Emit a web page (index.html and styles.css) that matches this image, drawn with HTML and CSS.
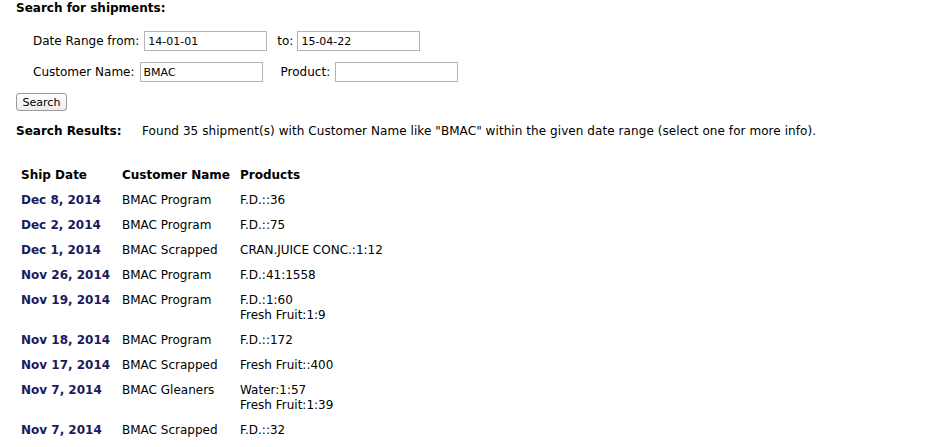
FILE: index.html
```html
<!DOCTYPE html>
<html>
<head>
<meta charset="utf-8">
<link rel="stylesheet" href="styles.css">
</head>
<body>
<div class="page">
  <h1 class="title">Search for shipments:</h1>
  <form class="search-form">
    <div class="form-row">
      <label class="lbl lbl-from">Date Range from:</label>
      <input class="field" type="text" value="14-01-01">
      <label class="lbl lbl-to">to:</label>
      <input class="field" type="text" value="15-04-22">
    </div>
    <div class="form-row">
      <label class="lbl lbl-cust">Customer Name:</label>
      <input class="field" type="text" value="BMAC">
      <label class="lbl lbl-prod">Product:</label>
      <input class="field" type="text" value="">
    </div>
    <button class="btn" type="button">Search</button>
  </form>
  <div class="results-line">
    <span class="results-label">Search Results:</span>
    <span class="results-text">Found 35 shipment(s) with Customer Name like "BMAC" within the given date range (select one for more info).</span>
  </div>
  <table class="results">
    <thead>
      <tr><th class="c-date">Ship Date</th><th class="c-cust">Customer Name</th><th>Products</th></tr>
    </thead>
    <tbody>
      <tr><td class="date">Dec 8, 2014</td><td>BMAC Program</td><td>F.D.::36</td></tr>
      <tr><td class="date">Dec 2, 2014</td><td>BMAC Program</td><td>F.D.::75</td></tr>
      <tr><td class="date">Dec 1, 2014</td><td>BMAC Scrapped</td><td>CRAN.JUICE CONC.:1:12</td></tr>
      <tr><td class="date">Nov 26, 2014</td><td>BMAC Program</td><td>F.D.:41:1558</td></tr>
      <tr><td class="date">Nov 19, 2014</td><td>BMAC Program</td><td>F.D.:1:60<br>Fresh Fruit:1:9</td></tr>
      <tr><td class="date">Nov 18, 2014</td><td>BMAC Program</td><td>F.D.::172</td></tr>
      <tr><td class="date">Nov 17, 2014</td><td>BMAC Scrapped</td><td>Fresh Fruit::400</td></tr>
      <tr><td class="date">Nov 7, 2014</td><td>BMAC Gleaners</td><td>Water:1:57<br>Fresh Fruit:1:39</td></tr>
      <tr><td class="date">Nov 7, 2014</td><td>BMAC Scrapped</td><td>F.D.::32</td></tr>
    </tbody>
  </table>
</div>
</body>
</html>
```

FILE: styles.css
```css
html, body {
  margin: 0;
  padding: 0;
  background: #fff;
}
body {
  font-family: "DejaVu Sans", Verdana, sans-serif;
  font-size: 12px;
  color: #000;
}
.page {
  padding: 1px 0 0 16px;
}
.title {
  font-size: 12px;
  font-weight: bold;
  margin: 0;
  line-height: 15px;
}
.search-form {
  margin: 15px 0 0 0;
}
.form-row {
  display: flex;
  align-items: center;
  height: 20px;
  margin: 0 0 11px 17px;
}
.form-row + .form-row {
  margin-bottom: 11px;
}
.lbl {
  line-height: 15px;
}
.lbl-from { margin-right: 5px; }
.lbl-to { margin: 0 4px 0 10px; }
.lbl-cust { margin-right: 5px; }
.lbl-prod { margin: 0 5px 0 18px; }
.field {
  box-sizing: border-box;
  width: 123px;
  height: 20px;
  border: 1px solid #b4b4b4;
  padding: 1px 4px 0 3px;
  font-family: "DejaVu Sans", Verdana, sans-serif;
  font-size: 11px;
  color: #000;
  margin: 0;
  outline: none;
}
.btn {
  display: block;
  box-sizing: border-box;
  width: 51px;
  height: 18px;
  margin: 0;
  padding: 0;
  border: 1px solid #9a9a9a;
  border-radius: 3px;
  background: linear-gradient(#ffffff, #ececec);
  font-family: "DejaVu Sans", Verdana, sans-serif;
  font-size: 11px;
  color: #000;
}
.results-line {
  display: flex;
  margin-top: 13px;
  line-height: 15px;
}
.results-label {
  font-weight: bold;
  width: 126px;
}
.results-text {
  letter-spacing: 0.07px;
}
.results {
  border-collapse: separate;
  border-spacing: 0;
  margin-top: 24px;
}
.results th {
  text-align: left;
  font-weight: bold;
  padding: 5px;
  line-height: 15px;
}
.results .c-date { width: 91px; }
.results .c-cust { width: 108px; }
.results td {
  vertical-align: top;
  padding: 5px;
  line-height: 15px;
}
.results .date {
  color: #1a1a5c;
  font-weight: bold;
}
```
